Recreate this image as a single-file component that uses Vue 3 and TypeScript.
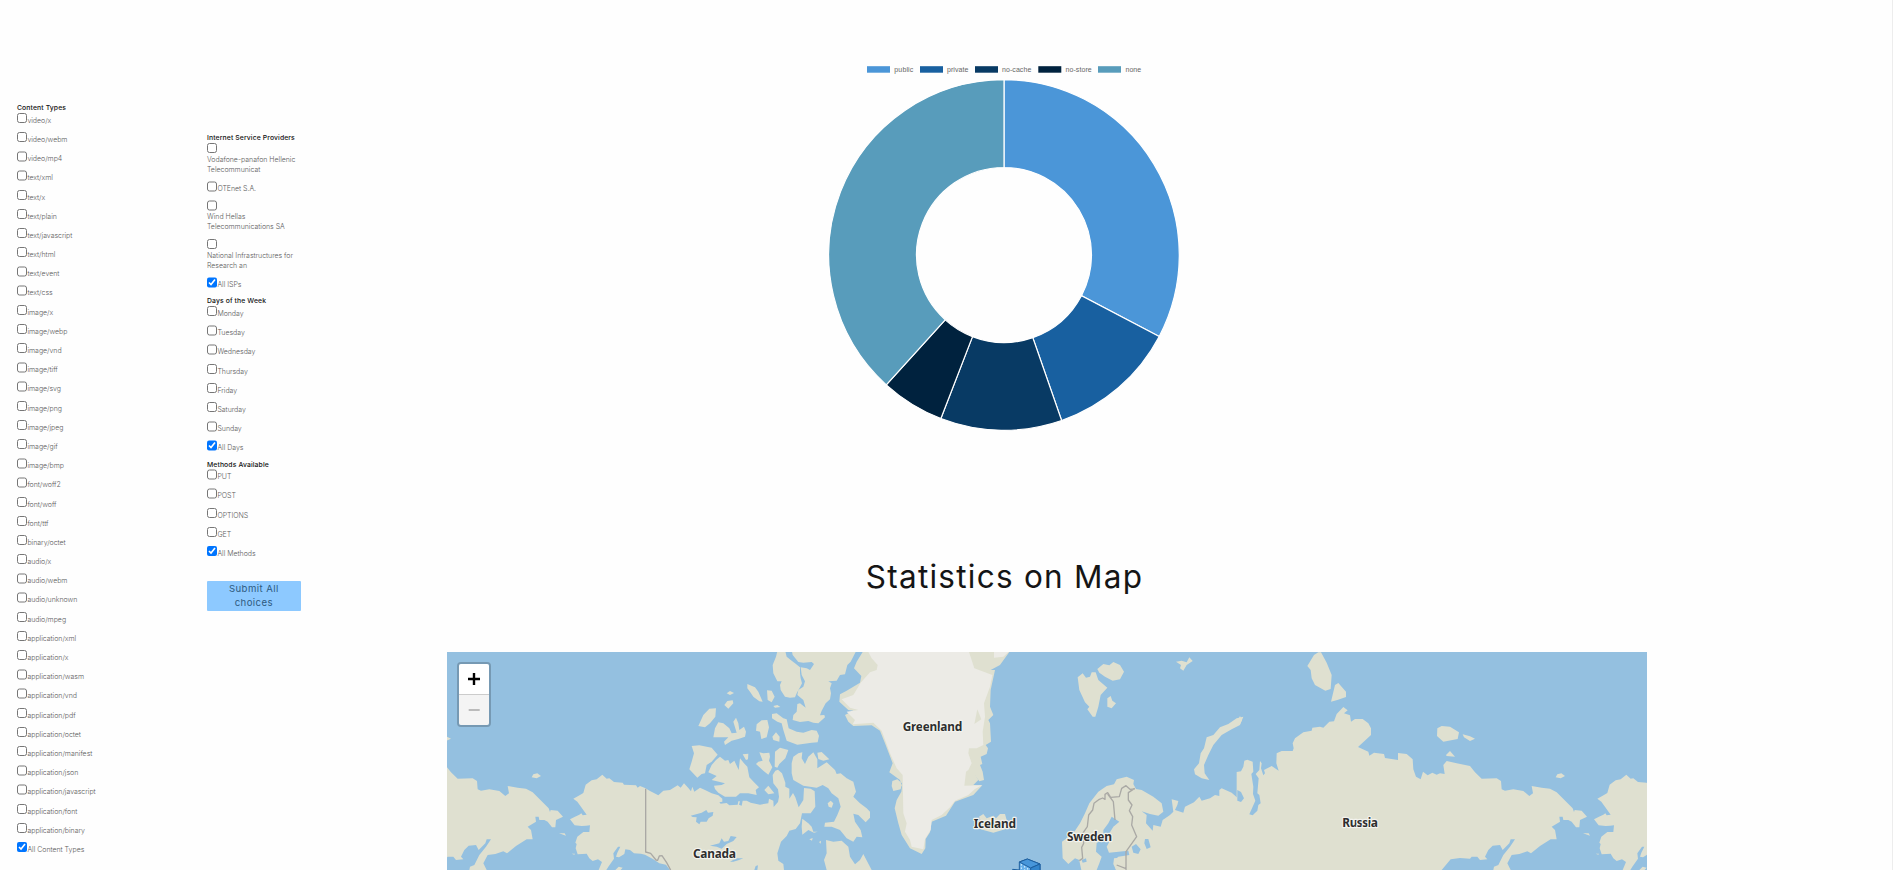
<script setup lang="ts">
interface Choice {
  label: string
  checked?: boolean
  wrap?: boolean
}
interface Group {
  title: string
  items: Choice[]
}

const toChoices = (names: string[], all: string): Choice[] => [
  ...names.map((label) => ({ label })),
  { label: all, checked: true },
]

const contentTypes: Group = {
  title: 'Content Types',
  items: toChoices(
    [
      'video/x', 'video/webm', 'video/mp4', 'text/xml', 'text/x', 'text/plain', 'text/javascript',
      'text/html', 'text/event', 'text/css', 'image/x', 'image/webp', 'image/vnd', 'image/tiff',
      'image/svg', 'image/png', 'image/jpeg', 'image/gif', 'image/bmp', 'font/woff2', 'font/woff',
      'font/ttf', 'binary/octet', 'audio/x', 'audio/webm', 'audio/unknown', 'audio/mpeg',
      'application/xml', 'application/x', 'application/wasm', 'application/vnd', 'application/pdf',
      'application/octet', 'application/manifest', 'application/json', 'application/javascript',
      'application/font', 'application/binary',
    ],
    'All Content Types',
  ),
}

const sideGroups: Group[] = [
  {
    title: 'Internet Service Providers',
    items: [
      { label: 'Vodafone-panafon Hellenic Telecommunicat', wrap: true },
      { label: 'OTEnet S.A.' },
      { label: 'Wind Hellas Telecommunications SA', wrap: true },
      { label: 'National Infrastructures for Research an', wrap: true },
      { label: 'All ISPs', checked: true },
    ],
  },
  {
    title: 'Days of the Week',
    items: toChoices(['Monday', 'Tuesday', 'Wednesday', 'Thursday', 'Friday', 'Saturday', 'Sunday'], 'All Days'),
  },
  {
    title: 'Methods Available',
    items: toChoices(['PUT', 'POST', 'OPTIONS', 'GET'], 'All Methods'),
  },
]

interface Slice {
  label: string
  color: string
  from: number
  to: number
  x: number
  textX: number
  textWidth: number
}

const slices: Slice[] = [
  { label: 'public', color: '#4b96d8', from: 0, to: 117.7, x: 67, textX: 94.3, textWidth: 19 },
  { label: 'private', color: '#1860a0', from: 117.7, to: 160.8, x: 120, textX: 147, textWidth: 21.3 },
  { label: 'no-cache', color: '#083a64', from: 160.8, to: 201.1, x: 175, textX: 202, textWidth: 29.3 },
  { label: 'no-store', color: '#00223e', from: 201.1, to: 222.2, x: 238.3, textX: 265.5, textWidth: 26.2 },
  { label: 'none', color: '#589cbb', from: 222.2, to: 360, x: 298, textX: 325.5, textWidth: 15.7 },
]

const CX = 204
const CY = 205
const OUTER = 175.3
const INNER = 87.5

const point = (deg: number, r: number): string => {
  const a = (deg * Math.PI) / 180
  return `${(CX + r * Math.sin(a)).toFixed(2)},${(CY - r * Math.cos(a)).toFixed(2)}`
}

const arc = (s: Slice): string =>
  `M${point(s.from, OUTER)} A${OUTER},${OUTER} 0 0 1 ${point(s.to, OUTER)} ` +
  `L${point(s.to, INNER)} A${INNER},${INNER} 0 0 0 ${point(s.from, INNER)} Z`
</script>

<template>
  <div class="page">
    <aside class="filters first">
      <section class="group">
        <h4>{{ contentTypes.title }}</h4>
        <label v-for="c in contentTypes.items" :key="c.label" class="choice">
          <input type="checkbox" :checked="c.checked" /><span>{{ c.label }}</span>
        </label>
      </section>
    </aside>

    <aside class="filters second">
      <section v-for="g in sideGroups" :key="g.title" class="group">
        <h4>{{ g.title }}</h4>
        <label v-for="c in g.items" :key="c.label" class="choice" :class="{ wrap: c.wrap }">
          <input type="checkbox" :checked="c.checked" /><span>{{ c.label }}</span>
        </label>
      </section>
      <button class="submit">Submit All choices</button>
    </aside>

    <main class="content">
      <svg class="chart" width="408" height="400" viewBox="0 0 408 400">
        <g v-for="s in slices" :key="s.label">
          <rect :x="s.x" y="16.2" width="23" height="6.5" :fill="s.color" />
          <text :x="s.textX" y="21.5" :textLength="s.textWidth">{{ s.label }}</text>
          <path :d="arc(s)" :fill="s.color" stroke="#fff" stroke-width="1.2" />
        </g>
      </svg>

      <h1>Statistics on Map</h1>

      <div class="map">
        <svg width="1200" height="218" viewBox="0 0 3600 654">
          <defs>
            <g id="world">
              <!-- Alaska and mainland Canada -->
              <g class="land" transform="translate(-21 -36)">
                <path d="M468,700 L476,690 486,666 474,658 458,663 448,655 440,641 413,643 407,625 410,612 406,608 412,590 430,576 448,576 450,556 438,557 425,558 404,556 390,538 405,530 418,524 424,520 428,526 440,524 425,503 412,485 400,476 416,467 430,459 437,434 455,421 470,418 487,404 500,416 508,415 522,426 548,428 552,434 588,436 593,443 600,438 615,444 630,453 655,466 670,452 690,450 713,436 722,443 732,430 745,444 753,454 757,440 763,455 780,443 795,450 815,460 835,466 847,476 847,485 838,487 842,491 860,489 868,496 893,494 895,484 900,484 897,494 905,497 908,482 920,482 932,488 960,494 985,490 987,476 1000,482 1001,501 1014,486 1017,470 1014,448 1000,430 998,405 1006,392 1014,389 1026,400 1036,428 1036,440 1048,446 1048,476 1059,459 1066,472 1076,502 1090,480 1092,444 1112,446 1124,454 1126,500 1112,520 1086,520 1080,550 1067,567 1048,572 1040,588 1023,605 1012,640 1015,662 1030,672 1033,700 1060,760 700,760 690,690 678,674 658,670 640,658 615,644 603,641 582,640 570,630 556,628 553,642 537,652 528,650 532,638 541,620 534,620 520,640 522,656 505,680 493,700 Z" />
                <path d="M275,412 L280,403 292,400 303,408 290,415 Z M357,580 L374,580 378,587 Z M395,641 L405,641 403,644 Z M526,690 L536,680 548,683 540,692 Z" />
                <path class="water" d="M752,527 L785,518 799,510 804,518 820,516 818,527 806,535 800,545 782,545 778,553 768,545 770,532 758,531 Z M810,617 L838,610 845,595 852,605 865,603 872,588 890,591 880,603 860,612 845,626 830,620 Z M870,665 L888,655 910,655 895,661 880,665 Z M943,690 L947,678 954,676 952,690 Z" />
                <path class="border" d="M617,446 V636 L632,640 648,660 653,661 658,648 666,647 680,668 692,690" />
              </g>

              <!-- Canadian Arctic -->
              <g class="land" transform="translate(579 -36)">
                <path d="M413,30 L408,50 398,75 400,100 412,124 425,124 420,135 422,150 435,170 450,173 465,172 470,160 480,142 486,130 482,115 480,100 480,82 465,70 455,62 440,50 435,30 Z" />
                <path d="M455,30 L458,45 475,66 490,68 515,66 522,72 510,90 500,85 482,82 485,105 495,124 490,140 475,150 472,165 490,180 497,203 480,190 472,192 470,215 460,225 458,240 480,246 505,243 520,248 535,250 555,232 553,225 540,226 545,212 557,190 570,178 573,160 570,145 575,130 565,124 590,122 600,105 615,103 622,75 632,65 650,30 Z" />
                <path d="M322,132 L345,142 355,155 368,185 358,184 340,170 330,155 322,145 Z M381,151 L395,152 404,170 395,187 383,180 Z M260,160 L270,153 282,159 270,165 Z M253,195 L262,183 278,181 280,190 265,206 Z M400,198 L412,195 421,201 405,203 Z M175,258 L190,225 208,206 228,205 226,230 210,250 195,262 Z M235,247 L250,250 268,265 275,280 290,278 285,262 280,245 288,233 295,250 298,270 312,260 318,275 315,290 295,297 275,302 255,315 252,305 265,292 220,292 225,265 Z M350,253 L365,241 382,240 387,262 380,292 364,297 360,275 348,272 Z M397,290 L408,277 419,290 418,305 400,300 Z M396,222 L410,220 430,235 440,238 446,265 470,275 490,278 515,270 530,272 537,287 533,307 515,308 472,314 440,302 430,270 425,250 412,245 396,235 Z" />
                <path d="M155,318 L178,316 215,323 233,344 215,365 200,375 195,400 185,402 172,413 148,388 155,365 162,340 Z" />
                <path d="M240,350 L255,362 265,360 270,372 283,362 296,390 300,355 312,370 322,380 328,412 345,430 357,442 347,450 350,465 325,460 300,460 288,470 255,470 235,458 225,447 222,437 245,435 255,430 215,420 230,408 205,397 215,375 228,360 Z M308,343 L325,341 324,358 318,360 Z M358,337 L370,340 388,338 390,350 387,362 397,382 385,404 370,392 348,372 355,365 368,362 Z M405,335 L420,323 445,330 436,355 418,372 412,383 404,380 Z M532,338 L545,336 568,358 550,362 535,357 Z M373,450 L385,437 403,460 385,463 Z" />
                <path d="M455,370 L460,350 475,340 487,337 485,355 495,372 505,350 520,337 532,358 532,385 560,367 585,390 590,402 602,400 620,415 640,425 648,455 640,470 660,490 680,505 690,515 690,533 677,547 655,525 640,521 645,545 662,570 667,592 650,590 640,605 620,595 600,570 575,560 553,560 555,548 582,545 592,525 602,500 595,475 575,460 565,445 548,435 530,443 490,437 460,420 455,400 Z" />
                <path d="M563,490 L572,482 580,490 575,503 566,500 Z" />
                <path d="M487,536 L505,550 515,560 520,575 533,575 522,578 505,570 487,584 485,560 Z M508,598 L518,594 516,602 Z M537,606 L543,602 542,611 Z M700,740 L560,740 560,690 552,660 560,640 558,600 580,605 605,602 625,620 630,650 645,673 660,660 670,642 682,665 695,690 Z" />
              </g>

              <!-- Greenland, Iceland, Svalbard, Novaya Zemlya -->
              <g class="land" transform="translate(1179 -36)">
                <path d="M68,36 L50,65 42,85 64,108 60,128 20,152 0,163 -2,185 25,210 40,212 15,225 25,245 40,258 95,256 120,272 135,310 158,370 148,397 180,420 186,440 184,455 170,480 164,505 175,550 185,585 210,625 245,642 256,625 257,597 270,577 275,545 318,527 345,485 400,465 427,436 400,435 415,420 403,402 418,424 432,420 428,395 420,375 427,372 422,350 440,342 444,325 437,315 453,305 450,250 445,240 460,225 450,200 452,150 465,90 452,90 480,75 508,36 Z M157,423 L172,418 186,430 182,448 160,453 155,438 Z" />
                <path class="ice" d="M82,30 L95,55 113,75 110,90 90,97 62,128 40,165 5,178 30,203 55,210 20,215 45,240 38,253 100,248 125,272 150,340 170,385 188,405 190,520 200,550 195,575 210,600 215,620 250,628 255,597 272,570 275,540 305,525 330,502 345,482 385,465 405,447 426,436 373,437 378,395 385,390 395,370 385,340 387,325 410,325 430,315 428,275 435,230 432,190 450,140 457,105 403,85 387,36 Z M462,36 L506,36 490,50 462,53 Z" />
                <path d="M412,208 L424,238 403,252 Z" />
                <path d="M417,530 L430,522 440,535 460,527 468,535 480,522 495,522 500,540 512,552 495,568 460,578 430,570 405,562 425,550 Z" />
                <path d="M713,112 L728,100 738,113 750,110 755,97 767,97 775,120 802,143 782,165 775,200 766,230 758,230 742,208 748,200 735,187 718,150 Z M772,87 L790,72 808,76 820,66 840,75 852,95 840,118 818,122 795,110 778,98 Z M802,175 L812,168 817,182 828,190 815,205 802,200 Z M1008,65 L1025,62 1040,67 1048,52 1058,63 1040,75 1030,92 1020,85 1023,75 Z" />
                <path d="M1210,230 L1190,235 1165,252 1140,262 1120,285 1100,292 1092,325 1082,340 1077,370 1062,388 1065,403 1085,415 1108,420 1094,400 1092,375 1105,345 1120,315 1145,285 1175,268 1200,255 Z" />
              </g>

              <!-- Scandinavia and western Russia -->
              <g class="land" transform="translate(1179 -36)">
                <path d="M685,672 L668,655 666,605 700,580 720,550 735,520 748,490 775,455 800,438 822,433 830,418 860,410 882,420 880,432 888,447 905,450 940,470 965,490 970,515 955,527 930,522 905,514 920,525 918,550 938,572 940,555 962,560 968,540 990,525 1000,515 995,478 1015,483 1012,495 1005,510 1030,518 1035,500 1062,487 1078,470 1085,482 1110,475 1125,465 1138,468 1138,450 1145,445 1175,458 1204,484 1210,780 700,780 705,690 718,660 705,655 Z" />
                <path class="water" d="M815,530 L838,545 820,560 805,585 808,605 800,620 807,638 865,632 868,645 835,650 822,662 828,690 770,690 778,670 785,650 768,635 770,608 790,600 790,570 805,550 Z M725,660 L738,655 740,665 728,668 Z M875,620 L888,612 902,628 895,642 880,638 Z M915,597 L925,597 932,622 920,627 913,610 Z M703,690 L705,672 718,662 724,690 Z" />
                <path d="M822,655 L852,652 862,662 852,690 828,690 820,672 Z" />
                <path class="border" d="M718,662 L728,655 725,622 731,610 728,580 742,560 746,525 758,510 762,490 778,478 788,474 795,478 795,463 803,458 812,472 838,470 845,445 858,437 870,448 884,447 M803,462 L820,485 825,540 M884,445 L865,458 865,480 876,495 868,512 878,530 875,555 890,590 858,635 858,690 M830,675 L858,686" />
              </g>

              <!-- Siberia -->
              <g class="land" transform="translate(2379 -36)">
                <path d="M-10,760 V396 L3,394 10,380 13,362 22,359 38,365 40,395 34,402 40,440 39,462 46,482 38,500 28,523 38,526 52,512 55,495 62,490 58,465 52,460 56,415 47,402 58,390 60,363 65,370 63,385 70,406 75,400 72,390 95,378 116,392 109,370 110,340 125,333 158,333 161,325 158,310 165,295 190,277 215,272 217,263 240,260 250,263 268,245 282,244 290,222 310,201 323,211 312,220 330,226 333,245 345,237 368,237 385,250 393,265 393,285 354,321 385,335 388,347 402,338 432,342 435,354 474,360 474,339 500,342 518,358 520,388 528,410 542,418 549,395 563,406 577,398 590,404 600,400 614,402 610,375 620,363 650,370 690,378 705,397 725,416 770,415 783,423 785,448 795,452 820,448 850,453 868,468 879,460 875,438 905,443 930,446 950,457 998,505 1002,516 1004,510 1025,512 1041,530 1020,540 1018,562 1008,562 995,545 985,540 970,540 968,530 958,530 960,545 935,560 945,570 950,598 932,598 900,618 873,640 862,634 838,642 815,645 802,670 812,690 760,690 762,680 775,675 790,645 810,620 825,598 812,598 808,610 788,630 780,615 758,617 745,630 735,650 742,658 720,660 712,650 695,650 690,656 660,654 632,658 605,690 580,760 Z" />
                <path class="water" d="M-8,450 L3,456 12,475 3,486 -8,482 Z" />
                <path d="M235,37 L222,45 202,78 212,90 215,115 225,135 256,152 272,147 275,105 260,68 243,37 Z M285,135 L295,129 318,155 318,171 292,180 273,185 Z M592,265 L605,258 630,260 657,277 653,297 610,305 591,288 Z M668,283 L690,289 705,296 690,303 672,292 Z M618,345 L630,333 645,350 620,348 Z M0,228 L6,240 0,252 -6,240 Z" />
              </g>
            </g>
          </defs>

          <rect width="3600" height="654" class="water" />
          <use href="#world" />
          <use href="#world" x="-3072" />
          <use href="#world" x="3072" />

          <g class="place">
            <text x="738" y="619" textLength="129">Canada</text>
            <text x="1367" y="236" textLength="179">Greenland</text>
            <text x="1580" y="527" textLength="127">Iceland</text>
            <text x="1860" y="567" textLength="135">Sweden</text>
            <text x="2686" y="526" textLength="107">Russia</text>
          </g>

          <!-- Marker cube -->
          <g transform="translate(1179 -36)" stroke="#1d5f9f" stroke-width="3">
            <path fill="#67b0ea" d="M518,700 V688 L538,690 V666 L562,657 600,672 V700 Z" />
            <path fill="#4796da" d="M538,666 L562,657 600,672 572,684 Z" />
            <path fill="#3385cc" d="M572,684 L600,672 V700 H572 Z" />
            <path fill="none" stroke="#d7efff" stroke-dasharray="5 5" d="M544,672 V700 M554,678 V700 M563,684 V700" />
          </g>
        </svg>

        <div class="zoom">
          <button aria-label="Zoom in">
            <svg width="12" height="12" viewBox="0 0 12 12"><path d="M6 0V12M0 6H12" stroke="#000" stroke-width="2.4" /></svg>
          </button>
          <button class="off" aria-label="Zoom out">
            <svg width="12" height="12" viewBox="0 0 12 12"><path d="M.7 6H11.7" stroke="#bbb" stroke-width="1.8" /></svg>
          </button>
        </div>
      </div>
    </main>
  </div>
</template>

<style>
body {
  margin: 0;
  overflow: hidden;
}
</style>

<style scoped>
.page {
  box-sizing: border-box;
  display: flex;
  align-items: flex-start;
  width: 1893px;
  height: 870px;
  overflow: hidden;
  background: #fefefe;
  border-right: 1px solid #ededed;
  font-family: Inter, Lato, 'Liberation Sans', sans-serif;
}

.filters {
  box-sizing: border-box;
  flex: none;
}

.first {
  width: 190px;
  padding: 103.2px 0 0 17px;
}

.second {
  width: 257px;
  padding: 133.3px 0 0 17px;
}

h4 {
  margin: 0;
  height: 9.6px;
  font-size: 6.8px;
  line-height: 9.6px;
  font-weight: 500;
  letter-spacing: 0.13px;
  color: #111;
  white-space: nowrap;
}

.choice {
  display: flex;
  height: 19.2px;
  font-size: 7px;
  line-height: 10px;
  font-weight: 300;
  letter-spacing: -0.03px;
  color: #5c5c5c;
}

.choice input {
  flex: none;
  width: 10.4px;
  height: 10.4px;
  margin: 0;
}

.choice span {
  padding-top: 3px;
  white-space: nowrap;
}

.choice.wrap {
  display: block;
  width: 97px;
  height: 38.4px;
}

.choice.wrap input {
  display: block;
}

.choice.wrap span {
  display: block;
  padding-top: 1.6px;
  white-space: normal;
}

.submit {
  display: block;
  width: 93.6px;
  height: 30px;
  margin-top: 15.8px;
  padding: 0 16px;
  border: 0;
  border-radius: 1px;
  background: #8dc9ff;
  color: #2d5a80;
  font-family: inherit;
  font-size: 9.6px;
  line-height: 14px;
  letter-spacing: 0.42px;
}

.content {
  display: flex;
  flex: 1;
  flex-direction: column;
}

.chart {
  display: block;
  margin: 50px 0 0 353px;
}

.chart text {
  font-family: 'Liberation Sans', Arial, sans-serif;
  font-size: 7px;
  fill: #666;
}

h1 {
  width: 1115px;
  height: 40px;
  margin: 107px 0 0;
  color: #151515;
  font-size: 31.5px;
  line-height: 40px;
  font-weight: 400;
  letter-spacing: 1.25px;
  text-align: center;
}

.map {
  position: relative;
  width: 1200px;
  height: 218px;
  margin-top: 55px;
  overflow: hidden;
}

.map > svg {
  display: block;
}

.land {
  fill: #dfe0d0;
}

.water {
  fill: #94c0e0;
}

.ice {
  fill: #ecebe6;
}

.border {
  fill: none;
  stroke: #aaa9a5;
  stroke-width: 4;
  stroke-linejoin: round;
}

.place {
  font-family: 'Noto Sans', 'Open Sans', sans-serif;
  font-size: 36px;
  font-weight: 700;
  fill: #2e2e2e;
  stroke: #f3f3ee;
  stroke-width: 7;
  stroke-linejoin: round;
  paint-order: stroke;
}

.zoom {
  position: absolute;
  top: 10px;
  left: 10px;
  overflow: hidden;
  border: 2px solid rgba(0, 0, 0, 0.2);
  border-radius: 4px;
  background-clip: padding-box;
}

.zoom button {
  display: flex;
  align-items: center;
  justify-content: center;
  width: 30px;
  height: 30px;
  padding: 0;
  border: 0;
  background: #fff;
}

.zoom button:first-child {
  box-sizing: content-box;
  height: 30px;
  border-bottom: 1px solid #ccc;
}

.zoom .off {
  background: #f4f4f4;
}
</style>
